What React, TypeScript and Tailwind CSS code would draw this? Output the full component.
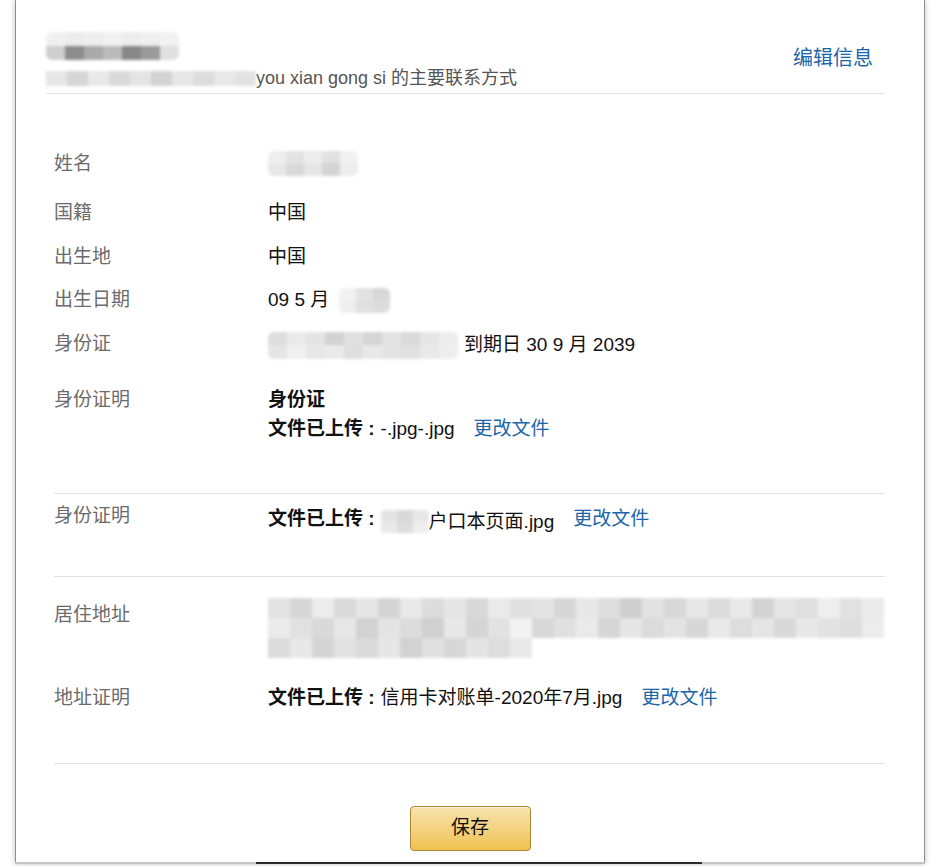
import React from "react";

const font = { fontFamily: '"Liberation Sans", Arial, "Noto Sans CJK SC", sans-serif' };

// Mosaic placeholder for the redacted parts of the screenshot
function Mosaic({ rows, cell, cellH, className = "" }: { rows: string[][]; cell: number; cellH?: number; className?: string }) {
    return (
        <div className={"inline-flex flex-col blur-[1.5px] rounded-md overflow-hidden align-middle " + className}>
            {rows.map((r, i) => (
                <div key={i} className="flex">
                    {r.map((c, j) => (
                        <div key={j} style={{ width: cell, height: cellH ?? cell / 1.4, background: c }} />
                    ))}
                </div>
            ))}
        </div>
    );
}

function Row({ label, children, className = "" }: { label: string; children: React.ReactNode; className?: string }) {
    return (
        <div className={"flex " + className}>
            <div className="w-[214px] shrink-0 text-[19px] leading-[24px] text-[#6b6b6b]">{label}</div>
            <div className="flex-1 text-[19px] leading-[24px] text-[#111]">{children}</div>
        </div>
    );
}

function Uploaded({ children }: { children: React.ReactNode }) {
    return (
        <div className="flex items-center">
            <span className="font-bold">文件已上传 :</span>
            <span className="ml-[6px]">{children}</span>
            <a className="ml-[19px] text-[#1a64a8]">更改文件</a>
        </div>
    );
}

export default function App() {
    return (
        <div className="min-h-screen bg-white" style={font}>
            <div className="mx-[15px] h-[864px] border-x border-[#8f8f8f] bg-white shadow-[0_0_6px_rgba(0,0,0,0.25)] flex flex-col">
                {/* header */}
                <div className="mx-[30px] mr-[39px] pt-[32px] border-b border-[#e3e3e3] flex">
                    <div className="flex-1">
                        <Mosaic
                            cell={19}
                            cellH={14}
                            rows={[
                                ["#f0f0f0", "#ececec", "#eeeeee", "#f1f1f1", "#ededed", "#efefef", "#f2f2f2"],
                                ["#cfcfcf", "#8c8c8c", "#a9a9a9", "#bbbbbb", "#878787", "#9a9a9a", "#e0e0e0"],
                            ]}
                        />
                        <div className="flex items-center mt-[6px] h-[24px] mb-[3px]">
                            <Mosaic
                                cell={21}
                                rows={[["#e6e6e6", "#d6d6d6", "#e9e9e9", "#dadada", "#e4e4e4", "#d3d3d3", "#e7e7e7", "#dddddd", "#e8e8e8", "#e2e2e2"]]}
                                className="!rounded-none"
                            />
                            <span className="text-[18px] text-[#555]">you xian gong si 的主要联系方式</span>
                        </div>
                    </div>
                    <a className="text-[20px] text-[#1a64a8] mt-[11px] mr-[12px]">编辑信息</a>
                </div>

                {/* details */}
                <div className="ml-[38px] mr-[39px] flex flex-col">
                    <Row label="姓名" className="mt-[58px]">
                        <Mosaic
                            cell={18}
                            rows={[
                                ["#eeeeee", "#e3e3e3", "#ececec", "#e1e1e1", "#f1f1f1"],
                                ["#e8e8e8", "#d9d9d9", "#e6e6e6", "#d4d4d4", "#ededed"],
                            ]}
                            className="-mt-[3px]"
                        />
                    </Row>
                    <Row label="国籍" className="mt-[25px]">中国</Row>
                    <Row label="出生地" className="mt-[20px]">中国</Row>
                    <Row label="出生日期" className="mt-[19px]">
                        <div className="flex items-center">
                            09 5 月
                            <Mosaic cell={17} rows={[["#f1f1f1", "#e2e2e2", "#d7d7d7"], ["#efefef", "#e0e0e0", "#dcdcdc"]]} className="ml-[10px]" />
                        </div>
                    </Row>
                    <Row label="身份证" className="mt-[19px]">
                        <div className="flex items-center">
                            <Mosaic
                                cell={19}
                                rows={[
                                    ["#dddddd", "#eaeaea", "#e4e4e4", "#d2d2d2", "#e0e0e0", "#d5d5d5", "#e3e3e3", "#dadada", "#e6e6e6", "#ececec"],
                                    ["#e5e5e5", "#f0f0f0", "#e7e7e7", "#eaeaea", "#dedede", "#e8e8e8", "#e3e3e3", "#e0e0e0", "#e9e9e9", "#eeeeee"],
                                ]}
                            />
                            <span className="ml-[6px]">到期日 30 9 月 2039</span>
                        </div>
                    </Row>
                    <Row label="身份证明" className="mt-[29px]">
                        <div className="font-bold">身份证</div>
                        <div className="mt-[5px]">
                            <Uploaded>-.jpg-.jpg</Uploaded>
                        </div>
                    </Row>
                    <div className="mt-[52px] border-t border-[#e3e3e3]" />
                    <Row label="身份证明" className="mt-[10px]">
                        <Uploaded>
                            <span className="inline-flex items-center">
                                <Mosaic cell={16} rows={[["#e4e4e4", "#d9d9d9", "#e8e8e8"], ["#e9e9e9", "#dddddd", "#eeeeee"]]} className="!rounded-sm" />
                                户口本页面.jpg
                            </span>
                        </Uploaded>
                    </Row>
                    <div className="mt-[42px] border-t border-[#e3e3e3]" />
                    <Row label="居住地址" className="mt-[26px]">
                        <Mosaic
                            cell={22}
                            cellH={20}
                            rows={[
                                ["#e3e3e3", "#d7d7d7", "#ececec", "#dadada", "#e6e6e6", "#d4d4d4", "#e9e9e9", "#dcdcdc", "#e5e5e5", "#d9d9d9", "#eaeaea", "#e0e0e0", "#e4e4e4", "#d6d6d6", "#e8e8e8", "#dedede", "#cfcfcf", "#e2e2e2", "#d8d8d8", "#e7e7e7", "#dbdbdb", "#e9e9e9", "#d3d3d3", "#e5e5e5", "#dfdfdf", "#eeeeee", "#e1e1e1", "#ebebeb"],
                                ["#ebebeb", "#e1e1e1", "#d9d9d9", "#e7e7e7", "#d2d2d2", "#e4e4e4", "#dcdcdc", "#d0d0d0", "#e8e8e8", "#d5d5d5", "#e2e2e2", "#f2f2f2", "#d8d8d8", "#e0e0e0", "#eaeaea", "#d6d6d6", "#e6e6e6", "#dbdbdb", "#e3e3e3", "#d7d7d7", "#e9e9e9", "#dddddd", "#e5e5e5", "#d9d9d9", "#e8e8e8", "#e2e2e2", "#dedede", "#ececec"],
                                ["#dcdcdc", "#e8e8e8", "#d4d4d4", "#e1e1e1", "#dadada", "#e6e6e6", "#d2d2d2", "#e0e0e0", "#d7d7d7", "#e4e4e4", "#dddddd", "#e9e9e9", "#ffffff", "#ffffff", "#ffffff", "#ffffff", "#ffffff", "#ffffff", "#ffffff", "#ffffff", "#ffffff", "#ffffff", "#ffffff", "#ffffff", "#ffffff", "#ffffff", "#ffffff", "#ffffff"],
                            ]}
                            className="-mt-[5px] !rounded-none"
                        />
                    </Row>
                    <Row label="地址证明" className="mt-[28px]">
                        <Uploaded>信用卡对账单-2020年7月.jpg</Uploaded>
                    </Row>
                    <div className="mt-[53px] border-t border-[#e3e3e3]" />
                </div>

                {/* save */}
                <div className="flex justify-center mt-[42px]">
                    <button className="w-[121px] h-[45px] rounded-[4px] border border-[#a88734] bg-gradient-to-b from-[#f8e3ad] to-[#efc14e] text-[19px] text-[#111] shadow-[inset_0_1px_0_rgba(255,255,255,0.6)]">
                        保存
                    </button>
                </div>
                <div className="flex-1" />
                <div className="flex h-[2px] -mx-px">
                    <div className="w-[241px] bg-[#c4c4c4]" />
                    <div className="w-[446px] bg-[#2b2b2b]" />
                    <div className="flex-1 bg-[#c4c4c4]" />
                </div>
            </div>
        </div>
    );
}
